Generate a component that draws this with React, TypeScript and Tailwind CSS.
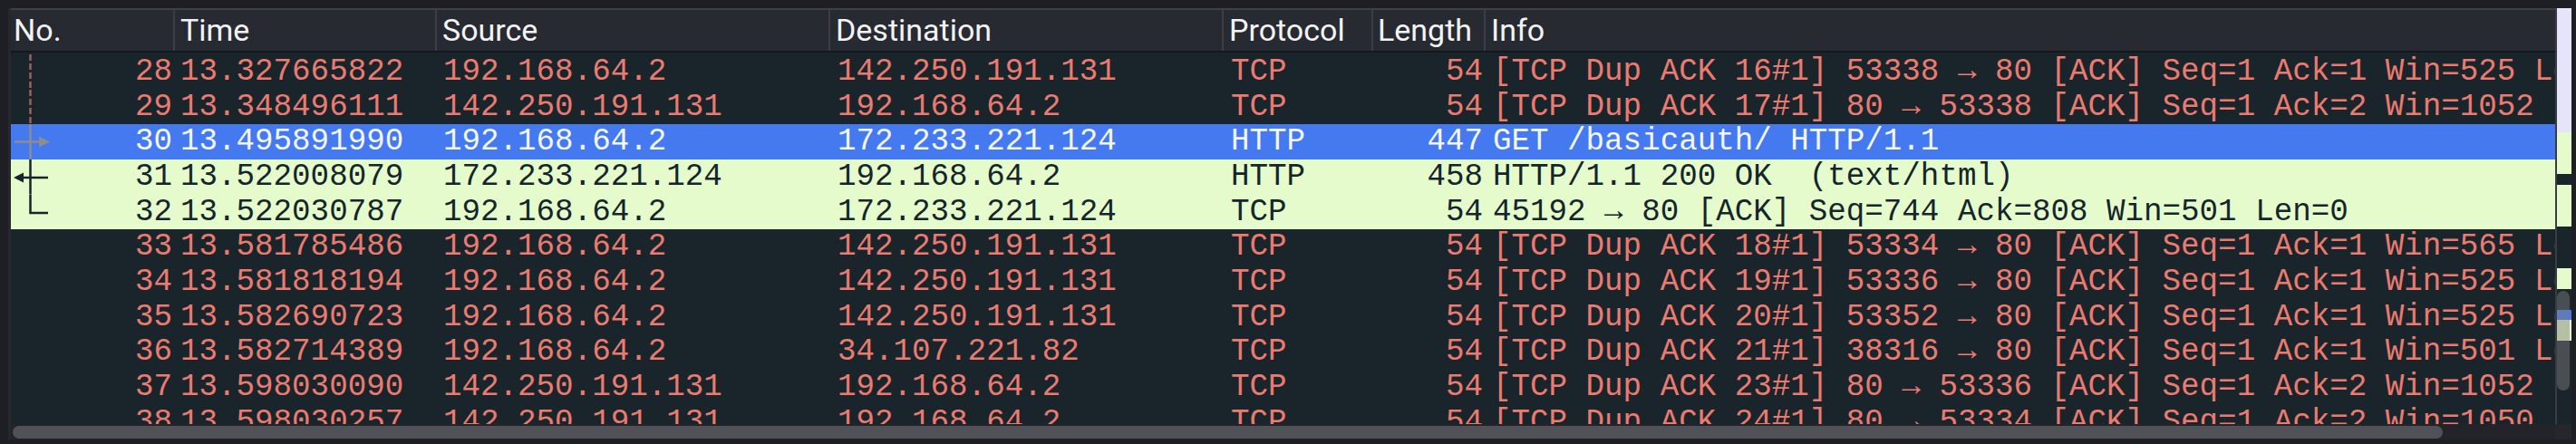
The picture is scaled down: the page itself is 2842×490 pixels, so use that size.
import type { ReactNode } from 'react';

// Wireshark-style packet list: header, colourised rows, minimap scrollbar

type Kind = 'bad' | 'sel' | 'http';
type Flow = 'none' | 'dash' | 'req' | 'resp' | 'end';

interface Packet {
  no: number;
  time: string;
  src: string;
  dst: string;
  proto: string;
  len: number;
  info: string;
  kind: Kind;
  flow: Flow;
}

const packets: Packet[] = [
  { no: 28, time: '13.327665822', src: '192.168.64.2', dst: '142.250.191.131', proto: 'TCP', len: 54, info: '[TCP Dup ACK 16#1] 53338 → 80 [ACK] Seq=1 Ack=1 Win=525 Len=0', kind: 'bad', flow: 'dash' },
  { no: 29, time: '13.348496111', src: '142.250.191.131', dst: '192.168.64.2', proto: 'TCP', len: 54, info: '[TCP Dup ACK 17#1] 80 → 53338 [ACK] Seq=1 Ack=2 Win=1052 Len=0', kind: 'bad', flow: 'dash' },
  { no: 30, time: '13.495891990', src: '192.168.64.2', dst: '172.233.221.124', proto: 'HTTP', len: 447, info: 'GET /basicauth/ HTTP/1.1', kind: 'sel', flow: 'req' },
  { no: 31, time: '13.522008079', src: '172.233.221.124', dst: '192.168.64.2', proto: 'HTTP', len: 458, info: 'HTTP/1.1 200 OK  (text/html)', kind: 'http', flow: 'resp' },
  { no: 32, time: '13.522030787', src: '192.168.64.2', dst: '172.233.221.124', proto: 'TCP', len: 54, info: '45192 → 80 [ACK] Seq=744 Ack=808 Win=501 Len=0', kind: 'http', flow: 'end' },
  { no: 33, time: '13.581785486', src: '192.168.64.2', dst: '142.250.191.131', proto: 'TCP', len: 54, info: '[TCP Dup ACK 18#1] 53334 → 80 [ACK] Seq=1 Ack=1 Win=565 Len=0', kind: 'bad', flow: 'none' },
  { no: 34, time: '13.581818194', src: '192.168.64.2', dst: '142.250.191.131', proto: 'TCP', len: 54, info: '[TCP Dup ACK 19#1] 53336 → 80 [ACK] Seq=1 Ack=1 Win=525 Len=0', kind: 'bad', flow: 'none' },
  { no: 35, time: '13.582690723', src: '192.168.64.2', dst: '142.250.191.131', proto: 'TCP', len: 54, info: '[TCP Dup ACK 20#1] 53352 → 80 [ACK] Seq=1 Ack=1 Win=525 Len=0', kind: 'bad', flow: 'none' },
  { no: 36, time: '13.582714389', src: '192.168.64.2', dst: '34.107.221.82', proto: 'TCP', len: 54, info: '[TCP Dup ACK 21#1] 38316 → 80 [ACK] Seq=1 Ack=1 Win=501 Len=0', kind: 'bad', flow: 'none' },
  { no: 37, time: '13.598030090', src: '142.250.191.131', dst: '192.168.64.2', proto: 'TCP', len: 54, info: '[TCP Dup ACK 23#1] 80 → 53336 [ACK] Seq=1 Ack=2 Win=1052 Len=0', kind: 'bad', flow: 'none' },
  { no: 38, time: '13.598030257', src: '142.250.191.131', dst: '192.168.64.2', proto: 'TCP', len: 54, info: '[TCP Dup ACK 24#1] 80 → 53334 [ACK] Seq=1 Ack=2 Win=1050 Len=0', kind: 'bad', flow: 'none' },
];

// related-packet graph drawn in the No. column
function FlowMark({ flow }: { flow: Flow }) {
  const dark = '#14262c';
  const gray = '#8c8d91';
  let body: ReactNode = null;
  if (flow === 'dash') {
    body = <line x1="21.5" y1="0" x2="21.5" y2="100%" stroke="#9a5f5e" strokeWidth="2.5" strokeDasharray="7 3" />;
  } else if (flow === 'req') {
    body = (
      <>
        <line x1="21.5" y1="0" x2="21.5" y2="100%" stroke={gray} strokeWidth="2.5" />
        <line x1="4" y1="19.5" x2="33" y2="19.5" stroke={gray} strokeWidth="2.5" />
        <polygon points="31,13.5 43,19.5 31,25.5" fill={gray} />
      </>
    );
  } else if (flow === 'resp') {
    body = (
      <>
        <line x1="21.5" y1="0" x2="21.5" y2="100%" stroke={dark} strokeWidth="2.5" />
        <line x1="10" y1="20" x2="41" y2="20" stroke={dark} strokeWidth="2.5" />
        <polygon points="3,20 14,14.5 14,25.5" fill={dark} />
      </>
    );
  } else if (flow === 'end') {
    body = <path d="M21.5 0 V20 H41" fill="none" stroke={dark} strokeWidth="2.5" />;
  }
  return <svg className="w-[46px] h-full shrink-0">{body}</svg>;
}

function PacketRow({ p }: { p: Packet }) {
  const tone =
    p.kind === 'sel'
      ? 'bg-[#4479ef] text-[#f3f5ff]'
      : p.kind === 'http'
        ? 'bg-[#e6fbcb] text-[#14262c]'
        : 'bg-[#1a242b] text-[#ea7b70]';
  return (
    <div className={`flex h-[38.67px] leading-[38.67px] whitespace-pre ${tone}`}>
      <div className="w-[181px] shrink-0 flex pr-[3px]">
        <FlowMark flow={p.flow} />
        <span className="flex-1 text-right">{p.no}</span>
      </div>
      <div className="w-[289px] shrink-0 pl-[6px]">{p.time}</div>
      <div className="w-[434px] shrink-0 pl-[7px]">{p.src}</div>
      <div className="w-[434px] shrink-0 pl-[8px]">{p.dst}</div>
      <div className="w-[165px] shrink-0 pl-[8px]">{p.proto}</div>
      <div className="w-[124px] shrink-0 pr-[3px] text-right">{p.len}</div>
      <div className="flex-1 min-w-0 overflow-hidden pl-[8px]">{p.info}</div>
    </div>
  );
}

function Header() {
  return (
    <div className="flex h-[49px] shrink-0 bg-[#282a32] border-t-2 border-b-2 border-t-[#3e4046] border-b-[#16171b] font-['Roboto',sans-serif] text-[34px] text-[#f2f3f5]">
      <div className="w-[181px] shrink-0 flex items-center pl-[3px] border-r-2 border-[#3c3e45]">No.</div>
      <div className="w-[289px] shrink-0 flex items-center pl-[6px] border-r-2 border-[#3c3e45]">Time</div>
      <div className="w-[434px] shrink-0 flex items-center pl-[6px] border-r-2 border-[#3c3e45]">Source</div>
      <div className="w-[434px] shrink-0 flex items-center pl-[6px] border-r-2 border-[#3c3e45]">Destination</div>
      <div className="w-[165px] shrink-0 flex items-center pl-[6px] border-r-2 border-[#3c3e45]">Protocol</div>
      <div className="w-[124px] shrink-0 flex items-center pl-[5px] border-r-2 border-[#3c3e45]">Length</div>
      <div className="flex-1 flex items-center pl-[6px]">Info</div>
    </div>
  );
}

// colour map of the whole capture, with the scroll thumb over it
function Minimap() {
  return (
    <div className="relative w-[16px] shrink-0 flex flex-col bg-[#1a242b]">
      <div className="h-[137px] bg-[#e6e4fb]" />
      <div className="h-[46px] bg-[#e6fbcb]" />
      <div className="h-[12px] bg-[#1a242b]" />
      <div className="h-[46px] bg-[#e6fbcb]" />
      <div className="h-[46px] bg-[#1a242b]" />
      <div className="h-[23px] bg-[#e6fbcb]" />
      <div className="h-[23px] bg-[#1a242b]" />
      <div className="h-[11px] bg-[#4479ef]" />
      <div className="h-[23px] bg-[#e6fbcb]" />
      <div className="flex-1 bg-[#1a242b]" />
      <div className="absolute left-0 top-[312px] w-[14px] h-[110px] rounded-full bg-[#7d7d7d7a]" />
    </div>
  );
}

export default function App() {
  return (
    <div className="w-[2842px] h-[490px] overflow-hidden bg-[#1e1f25] pt-[9px] pl-[9px] pr-[5px] flex flex-col">
      <div className="flex h-[459px] shrink-0">
        <div className="flex-1 min-w-0 flex flex-col border-l-[3px] border-[#26282e]">
          <Header />
          <div className="flex-1 overflow-hidden bg-[#1a242b] pt-[2px] font-['Liberation_Mono',monospace] text-[34.2px]">
            {packets.map((p) => (
              <PacketRow key={p.no} p={p} />
            ))}
          </div>
        </div>
        <div className="w-[2px] shrink-0 bg-[#3a3c42]" />
        <Minimap />
      </div>
      <div className="flex h-[17px] shrink-0">
        <div className="flex-1 border-l-[3px] border-[#26282e] bg-[#22242a] pt-[2px] pl-[2px]">
          <div className="w-[2681px] h-[14px] rounded-full bg-[#505257]" />
        </div>
        <div className="w-[18px] shrink-0 bg-[#25272d]" />
      </div>
    </div>
  );
}
